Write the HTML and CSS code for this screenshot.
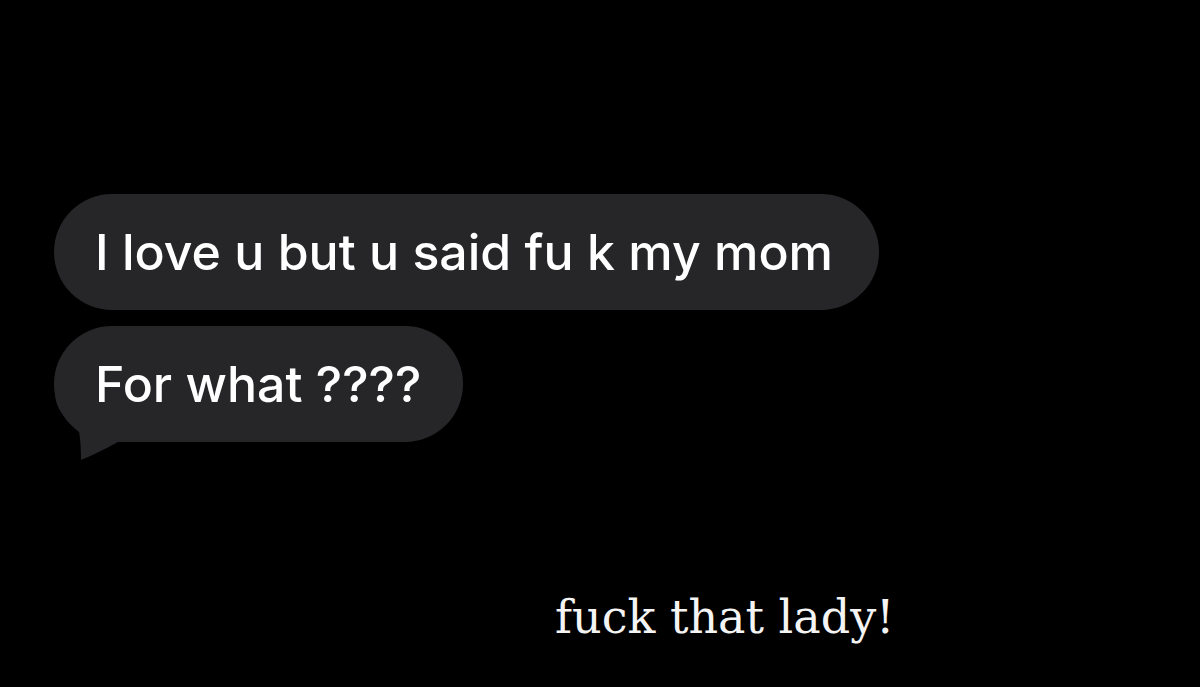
FILE: index.html
```html
<!DOCTYPE html>
<html>
<head>
<meta charset="UTF-8">
<title>Messages</title>
<link rel="stylesheet" href="styles.css">
</head>
<body>
  <div class="thread">
    <div class="bubble">I love u but u said fu k my mom</div>
    <div class="bubble last">For what ????
      <svg class="tail" width="64" height="70" viewBox="0 0 64 70">
        <path d="M1 0 C1 20 16 30 25 40 Q27 50 27 68 Q42 62 64 50 L64 0 Z" fill="#262629"/>
      </svg>
    </div>
  </div>
  <p class="caption">fuck that lady!</p>
</body>
</html>
```

FILE: styles.css
```css
* {
  margin: 0;
  padding: 0;
}

html, body {
  background: #000;
  height: 100%;
}

body {
  font-family: Inter, "Liberation Sans", sans-serif;
  color: #fff;
  overflow: hidden;
}

.thread {
  display: flex;
  flex-direction: column;
  align-items: flex-start;
  gap: 16px;
  padding: 194px 0 0 54px;
}

.bubble {
  position: relative;
  isolation: isolate;
  background: #262629;
  border-radius: 58px;
  font-size: 50px;
  font-weight: 500;
  line-height: 50px;
  padding: 33px 46px 33px 41px;
}

.bubble.last {
  padding-right: 42px;
}

/* tail sits behind the text */
.tail {
  position: absolute;
  left: 0;
  bottom: -20px;
  z-index: -1;
}

.caption {
  font-family: "DejaVu Serif", "Liberation Serif", serif;
  font-size: 46px;
  line-height: 50px;
  padding: 150px 0 0 555px;
  color: #f4f4f4;
}
```
